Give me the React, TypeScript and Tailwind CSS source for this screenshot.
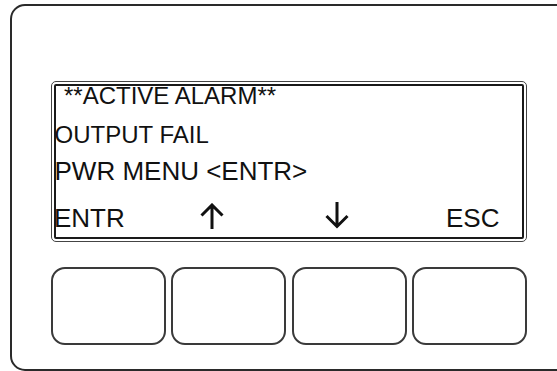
const font = { fontFamily: '"Liberation Sans", Arial, Helvetica, sans-serif' };

function UpArrow() {
  return (
    <svg width="24" height="26" viewBox="0 0 24 26" className="self-end -mb-[1px]">
      <path d="M12 26 V2.5 M1.5 12.5 L12 2 L22.5 12.5" fill="none" stroke="#111" strokeWidth="3" />
    </svg>
  );
}

function DownArrow() {
  return (
    <svg width="24" height="27" viewBox="0 0 24 27" className="self-end -mb-[1px]">
      <path d="M12 0 V24.5 M1.5 14 L12 24.5 L22.5 14" fill="none" stroke="#111" strokeWidth="3" />
    </svg>
  );
}

export default function App() {
  return (
    <div className="w-[557px] h-[371px] overflow-hidden bg-white text-[#111]" style={font}>
      <div className="ml-[10px] mt-[4px] w-[620px] h-[367px] rounded-[15px] border-2 border-[#2a2a2a] pl-[39px] pt-[75px]">
        {/* LCD window, double border */}
        <div className="w-[476px] h-[161px] rounded-[5px] border border-[#444] p-[2px]">
          <div className="h-full rounded-[2px] border-2 border-[#1a1a1a] flex flex-col pt-[1px]">
            <div className="h-[18px] leading-[18px] text-[24px] pl-[8px] whitespace-pre">**ACTIVE ALARM**</div>
            <div className="mt-[21px] h-[18px] leading-[18px] text-[24px] -ml-[1.5px]">OUTPUT FAIL</div>
            <div className="mt-[18px] h-[18px] leading-[18px] text-[26px] -ml-[1.5px]">PWR MENU &lt;ENTR&gt;</div>
            <div className="mt-[28px] h-[20px] leading-[20px] text-[26px] flex -ml-[2px]">
              <span className="w-[146px]">ENTR</span>
              <UpArrow />
              <span className="w-[101px]" />
              <DownArrow />
              <span className="w-[97px]" />
              <span>ESC</span>
            </div>
          </div>
        </div>
        {/* soft keys */}
        <div className="mt-[25px] w-[476px] grid grid-cols-4 gap-[5.5px]">
          <div className="h-[78px] rounded-[14px] border-2 border-[#3a3a3a]" />
          <div className="h-[78px] rounded-[14px] border-2 border-[#3a3a3a]" />
          <div className="h-[78px] rounded-[14px] border-2 border-[#3a3a3a]" />
          <div className="h-[78px] rounded-[14px] border-2 border-[#3a3a3a]" />
        </div>
      </div>
    </div>
  );
}
